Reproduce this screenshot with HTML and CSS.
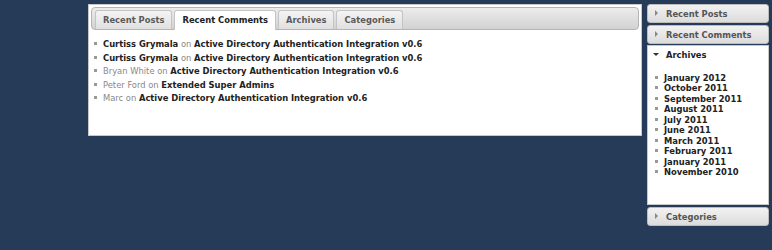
FILE: index.html
```html
<!DOCTYPE html>
<html lang="en">
<head>
  <meta charset="UTF-8">
  <meta name="viewport" content="width=device-width, initial-scale=1.0">
  <title>Widgets</title>
  <link rel="stylesheet" href="styles.css">
</head>
<body>

  <div class="page">
    <div class="tab-box">
      <ul class="tab-bar">
        <li class="tab">Recent Posts</li>
        <li class="tab active">Recent Comments</li>
        <li class="tab">Archives</li>
        <li class="tab">Categories</li>
      </ul>

      <ul class="comments">
        <li><b>Curtiss Grymala</b> on <b>Active Directory Authentication Integration v0.6</b></li>
        <li><b>Curtiss Grymala</b> on <b>Active Directory Authentication Integration v0.6</b></li>
        <li>Bryan White on <b>Active Directory Authentication Integration v0.6</b></li>
        <li>Peter Ford on <b>Extended Super Admins</b></li>
        <li>Marc on <b>Active Directory Authentication Integration v0.6</b></li>
      </ul>
    </div>

    <div class="sidebar">
      <div class="acc-head"><span class="arrow-right"></span>Recent Posts</div>
      <div class="acc-head"><span class="arrow-right"></span>Recent Comments</div>
      <div class="acc-open">
        <div class="acc-title"><span class="arrow-down"></span>Archives</div>
        <ul class="archives">
          <li>January 2012</li>
          <li>October 2011</li>
          <li>September 2011</li>
          <li>August 2011</li>
          <li>July 2011</li>
          <li>June 2011</li>
          <li>March 2011</li>
          <li>February 2011</li>
          <li>January 2011</li>
          <li>November 2010</li>
        </ul>
      </div>
      <div class="acc-head"><span class="arrow-right"></span>Categories</div>
    </div>
  </div>

</body>
</html>
```

FILE: styles.css
```css
body {
  margin: 0;
  background-color: #253b58;
  font-family: "DejaVu Sans Condensed", "DejaVu Sans", sans-serif;
  font-stretch: condensed;
  font-size: 9.3px;
}

ul {
  margin: 0;
  padding: 0;
  list-style: none;
}

.page {
  display: flex;
  align-items: flex-start;
  gap: 5px;
  padding: 4px 0 0 88px;
}

/* left tabbed widget */
.tab-box {
  width: 548px;
  height: 126px;
  background: white;
  border: 1px solid #c8c8c8;
  padding: 2px;
}

.tab-bar {
  display: flex;
  gap: 2px;
  height: 19px;
  padding: 2px 0 0 3px;
  background: linear-gradient(#ececec, #d2d2d2);
  border: 1px solid #b4b4b4;
  border-radius: 4px;
}

.tab {
  height: 18px;
  line-height: 18px;
  padding: 0 7px;
  font-weight: bold;
  color: #5a5a5a;
  background: linear-gradient(#f4f4f4, #e0e0e0);
  border: 1px solid #c4c4c4;
  border-bottom: none;
  border-radius: 3px 3px 0 0;
}

.tab.active {
  height: 19px;
  background: white;
  color: #222;
}

.comments {
  padding: 7px 0 0 3px;
  color: #888;
}

.comments li {
  line-height: 13.6px;
}

.comments li::before,
.archives li::before {
  content: "";
  display: inline-block;
  width: 3px;
  height: 3px;
  margin: 0 6px 2px 0;
  background: #999;
  vertical-align: middle;
}

.comments b {
  color: #222;
}

/* right accordion */
.sidebar {
  width: 122px;
  display: flex;
  flex-direction: column;
  gap: 2px;
}

.acc-head {
  height: 17px;
  line-height: 17px;
  padding-left: 7px;
  font-weight: bold;
  color: #555;
  background: linear-gradient(#f2f2f2, #dcdcdc);
  border: 1px solid #bcbcbc;
  border-radius: 3px;
  white-space: nowrap;
}

.arrow-right {
  display: inline-block;
  width: 0;
  height: 0;
  margin: 0 8px 1px 0;
  border-left: 3px solid #888;
  border-top: 3px solid transparent;
  border-bottom: 3px solid transparent;
}

.arrow-down {
  display: inline-block;
  width: 0;
  height: 0;
  margin: 0 7px 2px 0;
  border-top: 3px solid #333;
  border-left: 3px solid transparent;
  border-right: 3px solid transparent;
}

.acc-open {
  height: 158px;
  background: white;
  border: 1px solid #c8c8c8;
  margin-top: -1px;
}

.acc-title {
  padding: 3px 0 0 5px;
  font-weight: bold;
  color: #222;
}

.archives {
  padding: 13px 0 0 7px;
  font-weight: bold;
  color: #222;
}

.archives li {
  line-height: 10.45px;
}
```
